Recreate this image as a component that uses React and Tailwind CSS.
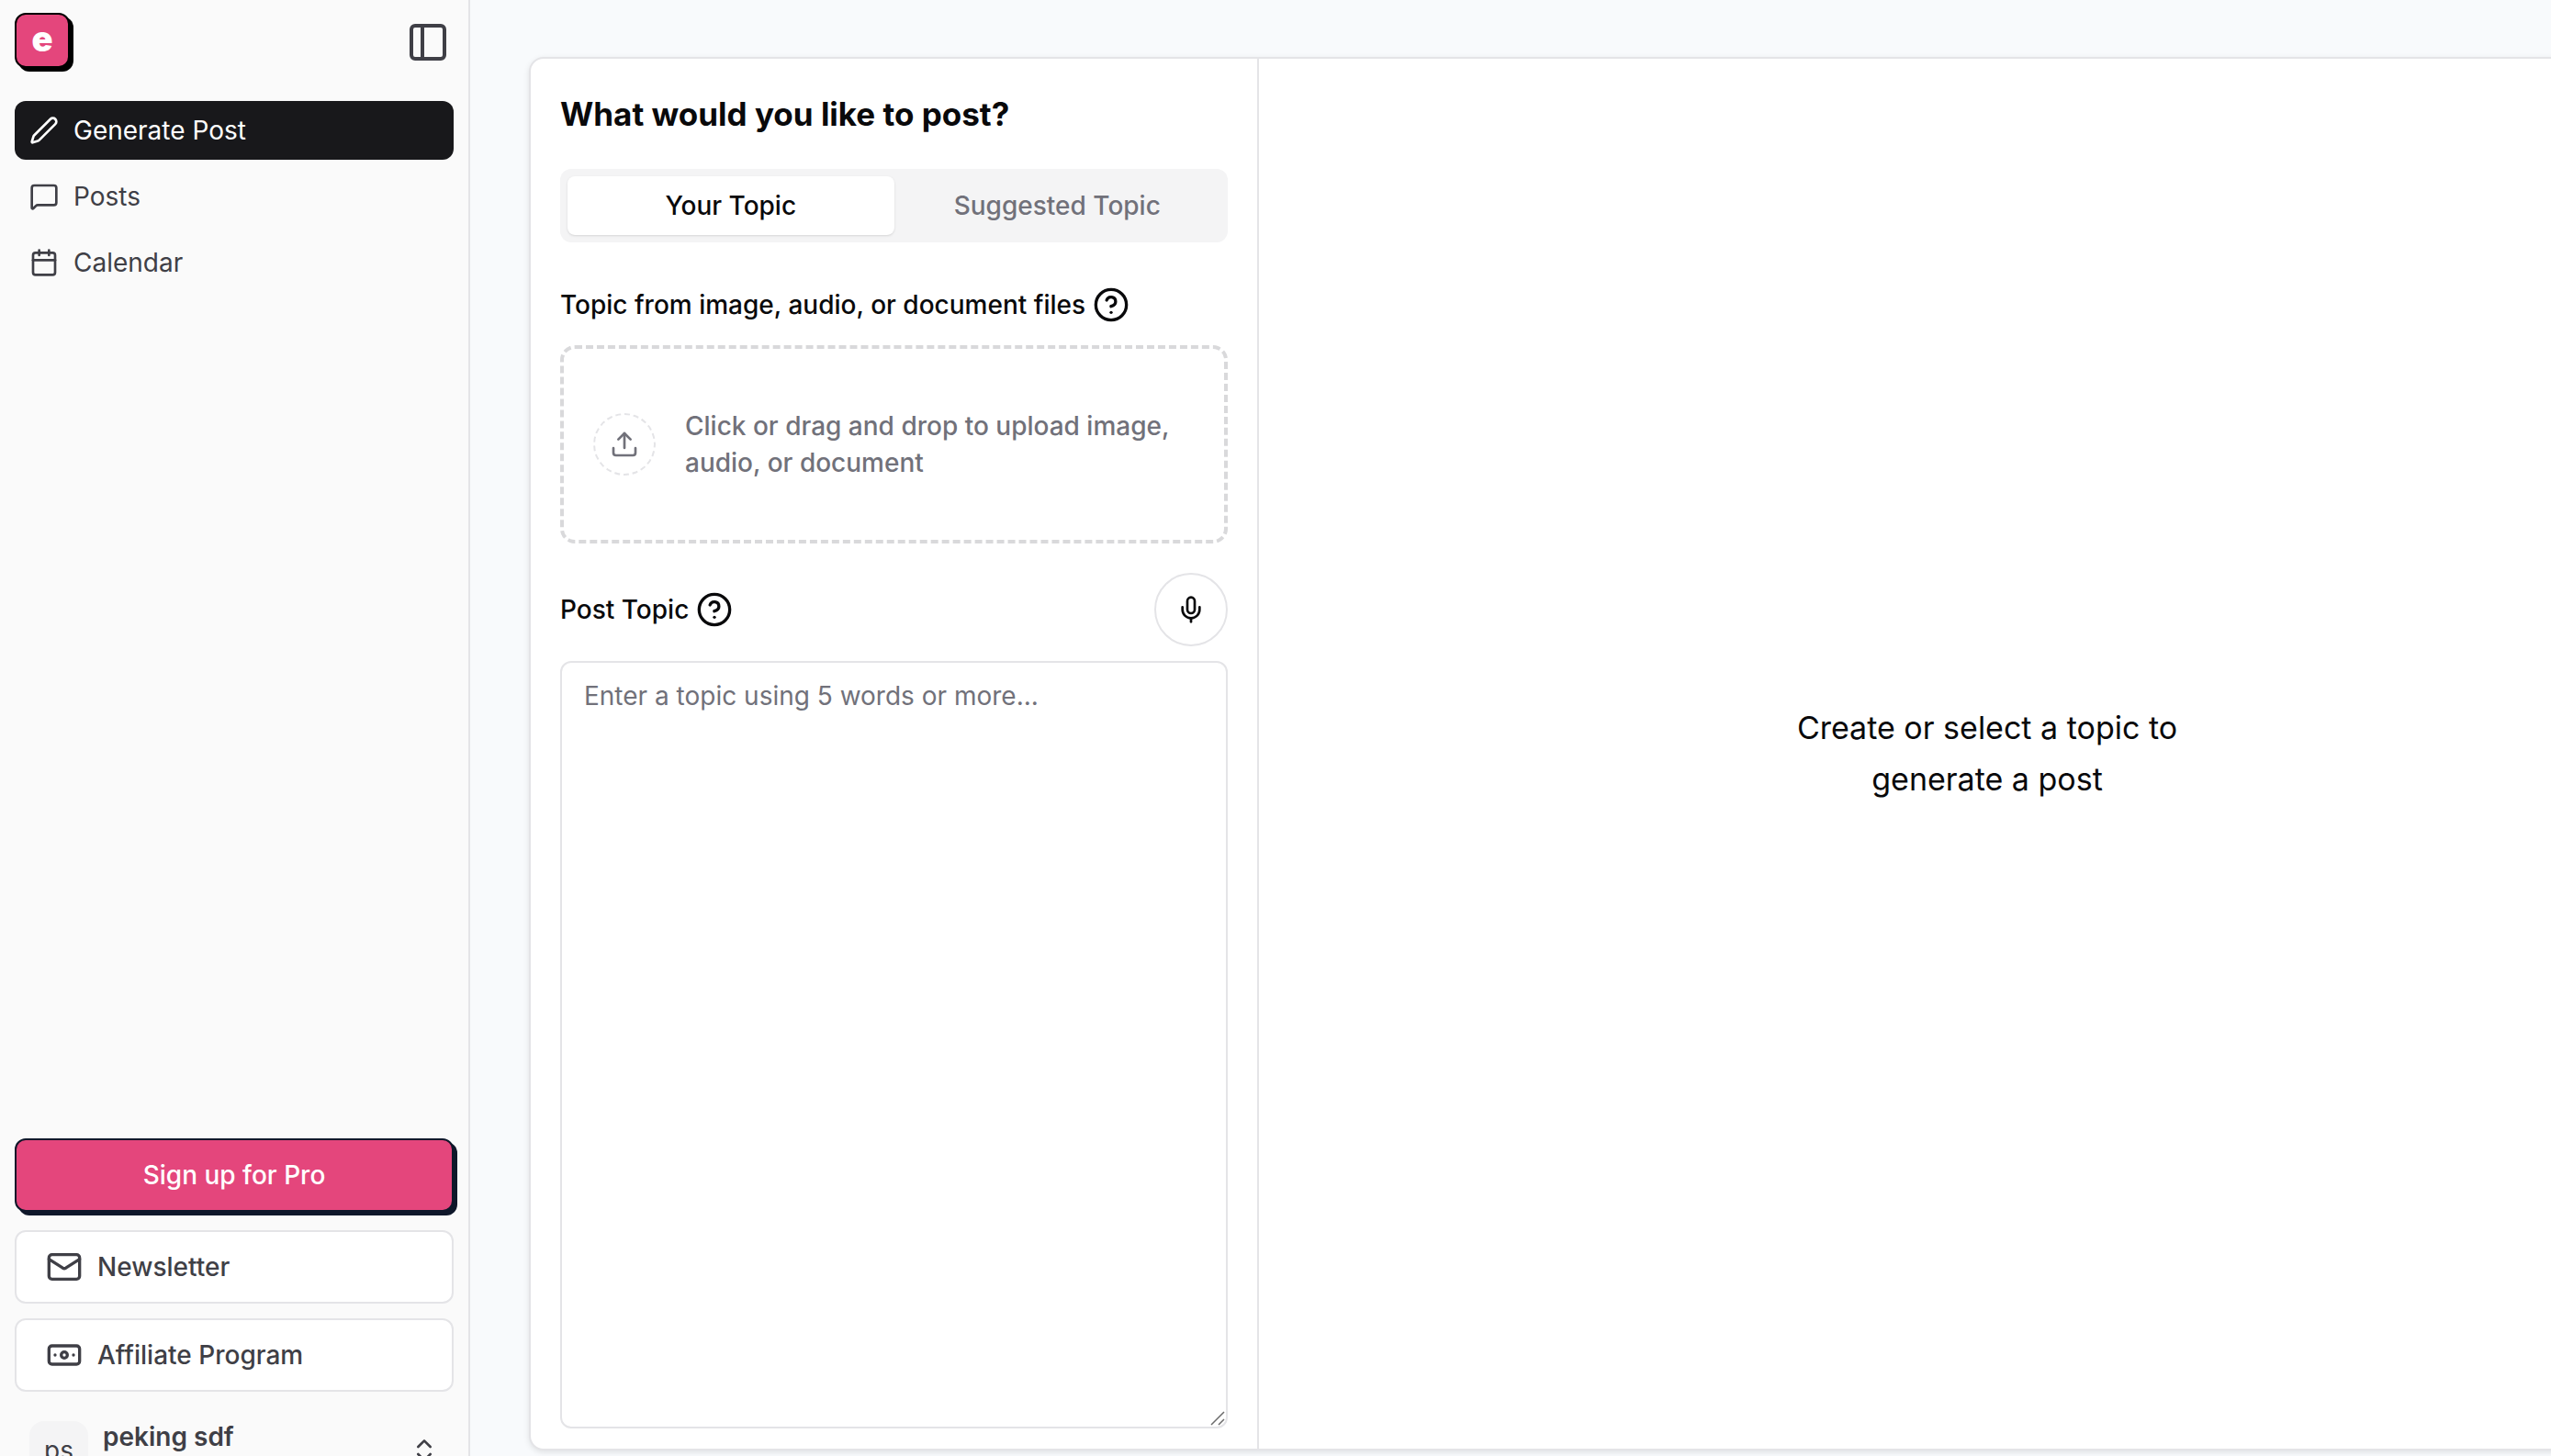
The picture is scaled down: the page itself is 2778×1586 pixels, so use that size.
import { PanelLeft, Pen, MessageSquare, Calendar, Mail, Banknote, ChevronsUpDown, CircleHelp, Mic, Upload } from "lucide-react";

const navItems = [
  { label: "Generate Post", icon: Pen, active: true },
  { label: "Posts", icon: MessageSquare, active: false },
  { label: "Calendar", icon: Calendar, active: false },
];

function Sidebar() {
  return (
    <aside className="flex h-screen w-[512px] shrink-0 flex-col border-r-2 border-[#e4e4e7] bg-[#fafafa] text-[#3f3f46]">
      <div className="flex items-start justify-between pt-3.5 pr-5 pl-4">
        <a
          href="#"
          aria-label="Home"
          className="flex size-[60px] items-center justify-center rounded-xl border-2 border-black bg-[#e4467c] pb-1 text-[38px] leading-none font-black text-white shadow-[4px_4px_0_#000]"
        >
          e
        </a>
        <button type="button" aria-label="Toggle sidebar" className="mt-2">
          <PanelLeft className="size-12" />
        </button>
      </div>
      <nav className="mt-9 flex flex-1 flex-col gap-2 px-4">
        {navItems.map(({ label, icon: Icon, active }) => (
          <a
            key={label}
            href="#"
            className={
              active
                ? "flex h-16 items-center gap-4 rounded-xl bg-[#18181b] px-4 text-white"
                : "flex h-16 items-center gap-4 rounded-xl px-4"
            }
          >
            <Icon className="size-8" />
            <span>{label}</span>
          </a>
        ))}
      </nav>
      <div className="-mb-[42px] flex flex-col px-4 font-medium">
        <button
          type="button"
          className="h-20 rounded-xl border-2 border-[#0f172a] bg-[#e4467c] text-white shadow-[4px_4px_0_#0f172a]"
        >
          Sign up for Pro
        </button>
        <a href="#" className="mt-5 flex h-20 items-center gap-4 rounded-xl border-2 border-[#e4e4e7] bg-white px-8">
          <Mail className="size-10" />
          Newsletter
        </a>
        <a href="#" className="mt-4 flex h-20 items-center gap-4 rounded-xl border-2 border-[#e4e4e7] bg-white px-8">
          <Banknote className="size-10" />
          Affiliate Program
        </a>
        <button type="button" className="mt-4 flex h-24 items-center gap-4 rounded-xl px-4 text-left">
          <span className="flex size-16 items-center justify-center rounded-2xl bg-[#f4f4f5] font-normal">ps</span>
          <span className="h-16 flex-1 leading-[34px] font-semibold">peking sdf</span>
          <ChevronsUpDown className="size-8" />
        </button>
      </div>
    </aside>
  );
}

function TopicForm() {
  return (
    <section className="flex flex-col border-r-2 border-[#e4e4e7] px-8 pt-8 pb-[22px] font-medium">
      <h1 className="text-[35px] leading-[56px] font-bold">What would you like to post?</h1>
      <div role="tablist" className="mt-8 grid h-20 grid-cols-2 rounded-xl bg-[#f4f4f5] p-2">
        <button type="button" role="tab" aria-selected="true" className="rounded-lg bg-white shadow-sm">
          Your Topic
        </button>
        <button type="button" role="tab" aria-selected="false" className="rounded-lg text-[#71717a]">
          Suggested Topic
        </button>
      </div>
      <div className="mt-12 flex items-center gap-2">
        <span id="upload-label">Topic from image, audio, or document files</span>
        <CircleHelp className="size-10" />
      </div>
      <button
        type="button"
        aria-labelledby="upload-label"
        className="mt-6 flex h-[216px] items-center gap-8 rounded-2xl border-4 border-dashed border-[#d9d9db] px-8 text-left text-[#71717a]"
      >
        <span className="flex size-[68px] shrink-0 items-center justify-center rounded-full border-2 border-dashed border-[#e4e4e7]">
          <Upload className="size-8" />
        </span>
        <span>Click or drag and drop to upload image, audio, or document</span>
      </button>
      <div className="mt-8 flex items-center justify-between">
        <div className="flex items-center gap-2">
          <label htmlFor="topic">Post Topic</label>
          <CircleHelp className="size-10" />
        </div>
        <button
          type="button"
          aria-label="Record topic"
          className="flex size-20 items-center justify-center rounded-full border-2 border-[#e4e4e7]"
        >
          <Mic className="size-8" />
        </button>
      </div>
      <div className="relative mt-4 flex flex-1">
        <textarea
          id="topic"
          placeholder="Enter a topic using 5 words or more..."
          className="flex-1 resize-none rounded-xl border-2 border-[#e4e4e7] px-6 py-4 font-normal placeholder:text-[#71717a]"
        />
        <svg
          viewBox="0 0 16 16"
          className="absolute right-[3px] bottom-[3px] size-4"
          fill="none"
          stroke="#6b6b6b"
          strokeWidth="1.5"
        >
          <path d="M1 15L15 1M9 15L15 9" />
        </svg>
      </div>
    </section>
  );
}

export default function App() {
  return (
    <div className="flex h-screen overflow-hidden bg-[#f8fafc] font-['Inter',sans-serif] text-[28px] leading-10 text-[#09090b]">
      <Sidebar />
      <main className="flex min-w-0 flex-1 pt-[62px] pb-1.5 pl-16">
        <div className="-mr-[181px] grid flex-1 grid-cols-3 rounded-2xl border-2 border-[#e4e4e7] bg-white shadow-[0_2px_6px_rgba(0,0,0,0.1)]">
          <TopicForm />
          <section className="col-span-2 flex items-center justify-center">
            <p className="max-w-md text-center text-[34px] leading-[56px]">
              Create or select a topic to generate a post
            </p>
          </section>
        </div>
      </main>
    </div>
  );
}
